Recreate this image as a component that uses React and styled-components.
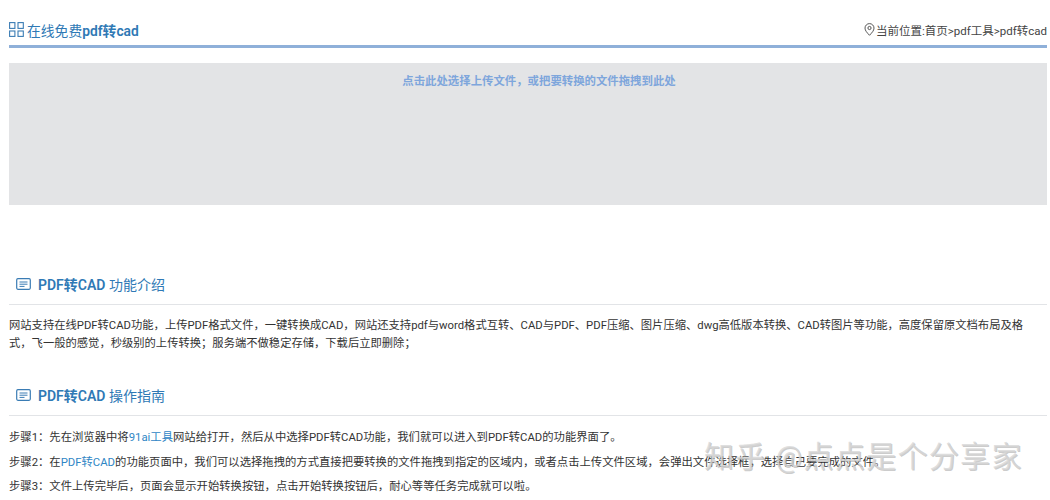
import React from 'react';
import styled, { createGlobalStyle } from 'styled-components';

const Global = createGlobalStyle`
  html, body { margin: 0; padding: 0; background: #fff; }
  body { font-family: "Roboto", "Noto Sans CJK SC", sans-serif; overflow: hidden; }
`;
const Page = styled.div`
  position: relative;
  width: 1050px;
  height: 500px;
  overflow: hidden;
  padding: 0 3px 0 9px;
  box-sizing: border-box;
`;
const TopBar = styled.header`
  height: 48px;
  box-sizing: border-box;
  padding-top: 20px;
  border-bottom: 3px solid #8fb0d9;
  display: flex;
  justify-content: space-between;
  align-items: flex-start;
`;
const TopTitle = styled.h1`
  margin: 0;
  display: flex;
  align-items: center;
  gap: 3px;
  height: 19px;
  font-size: 13.8px;
  font-weight: 400;
  color: #2f79b5;
  b { font-weight: 600; }
`;
const Crumbs = styled.div`
  display: flex;
  align-items: center;
  height: 19px;
  gap: 1px;
  font-size: 11.5px;
  color: #444;
`;
const Drop = styled.div`
  margin-top: 15px;
  height: 142px;
  background: #e3e4e6;
  text-align: center;
  padding: 9px 0 0 22px;
  box-sizing: border-box;
  font-size: 11.4px;
  line-height: 18px;
  font-weight: 700;
  color: #7ea6dc;
`;
const SectionHead = styled.h2`
  margin: ${p => p.$top}px 0 0;
  height: 39px;
  box-sizing: border-box;
  padding: 5px 0 7px 7px;
  border-bottom: 1px solid #e2e4e7;
  display: flex;
  align-items: center;
  gap: 7px;
  font-size: 14px;
  font-weight: 400;
  color: #2f79b5;
  b { font-weight: 600; }
`;
const Para = styled.p`
  margin: 12px 0 0;
  width: 1022px;
  font-size: 11.3px;
  line-height: 18px;
  color: #333;
`;
const Steps = styled.div`
  margin-top: 9px;
`;
const Step = styled.p`
  margin: 0;
  font-size: 11.33px;
  line-height: 24.5px;
  color: #333;
  white-space: nowrap;
  a { color: #2f86c5; text-decoration: none; }
`;
const Watermark = styled.div`
  position: absolute;
  left: 704px;
  top: 437px;
  font-size: 30px;
  line-height: 40px;
  letter-spacing: 1.3px;
  white-space: nowrap;
  color: rgba(215, 215, 215, 0.8);
  text-shadow: 1px 1px 0 rgba(160, 160, 160, 0.55);
`;

const GridIcon = () => (
  <svg width="15" height="15" viewBox="0 0 15 15" fill="none" stroke="#3a7cb4" strokeWidth="1.1">
    <rect x="0.6" y="0.6" width="5.3" height="5.8" />
    <rect x="9" y="0.6" width="5.3" height="5.8" />
    <rect x="0.6" y="9" width="5.3" height="5.4" />
    <rect x="9" y="9" width="5.3" height="5.4" />
  </svg>
);
const PinIcon = () => (
  <svg width="11" height="13" viewBox="0 0 11 13" fill="none" stroke="#444" strokeWidth="0.9">
    <path d="M5.5 12.3C3 9.6 1 7.6 1 5.1a4.5 4.5 0 0 1 9 0c0 2.5-2 4.5-4.5 7.2z" />
    <circle cx="5.5" cy="5" r="1.6" />
  </svg>
);
const NoteIcon = () => (
  <svg width="15" height="12" viewBox="0 0 15 12" fill="none" stroke="#3a7cb4" strokeWidth="1.2">
    <rect x="0.7" y="0.7" width="13.6" height="10.6" rx="1.2" />
    <path d="M3.5 4h8M3.5 6.2h8M3.5 8.4h5" strokeWidth="1" />
  </svg>
);

export default function App() {
  return (
    <Page>
      <Global />
      <TopBar>
        <TopTitle><GridIcon /><span>在线免费<b>pdf转cad</b></span></TopTitle>
        <Crumbs><PinIcon /><span>当前位置:首页&gt;pdf工具&gt;pdf转cad</span></Crumbs>
      </TopBar>
      <Drop>点击此处选择上传文件，或把要转换的文件拖拽到此处</Drop>
      <SectionHead $top={61}><NoteIcon /><span><b>PDF转CAD</b> 功能介绍</span></SectionHead>
      <Para>网站支持在线PDF转CAD功能，上传PDF格式文件，一键转换成CAD，网站还支持pdf与word格式互转、CAD与PDF、PDF压缩、图片压缩、dwg高低版本转换、CAD转图片等功能，高度保留原文档布局及格式，飞一般的感觉，秒级别的上传转换；服务端不做稳定存储，下载后立即删除；</Para>
      <SectionHead $top={24}><NoteIcon /><span><b>PDF转CAD</b> 操作指南</span></SectionHead>
      <Steps>
        <Step>步骤1：先在浏览器中将<a href="#a">91ai工具</a>网站给打开，然后从中选择PDF转CAD功能，我们就可以进入到PDF转CAD的功能界面了。</Step>
        <Step>步骤2：在<a href="#b">PDF转CAD</a>的功能页面中，我们可以选择拖拽的方式直接把要转换的文件拖拽到指定的区域内，或者点击上传文件区域，会弹出文件选择框，选择自己要完成的文件。</Step>
        <Step>步骤3：文件上传完毕后，页面会显示开始转换按钮，点击开始转换按钮后，耐心等等任务完成就可以啦。</Step>
      </Steps>
      <Watermark>知乎 @点点是个分享家</Watermark>
    </Page>
  );
}
